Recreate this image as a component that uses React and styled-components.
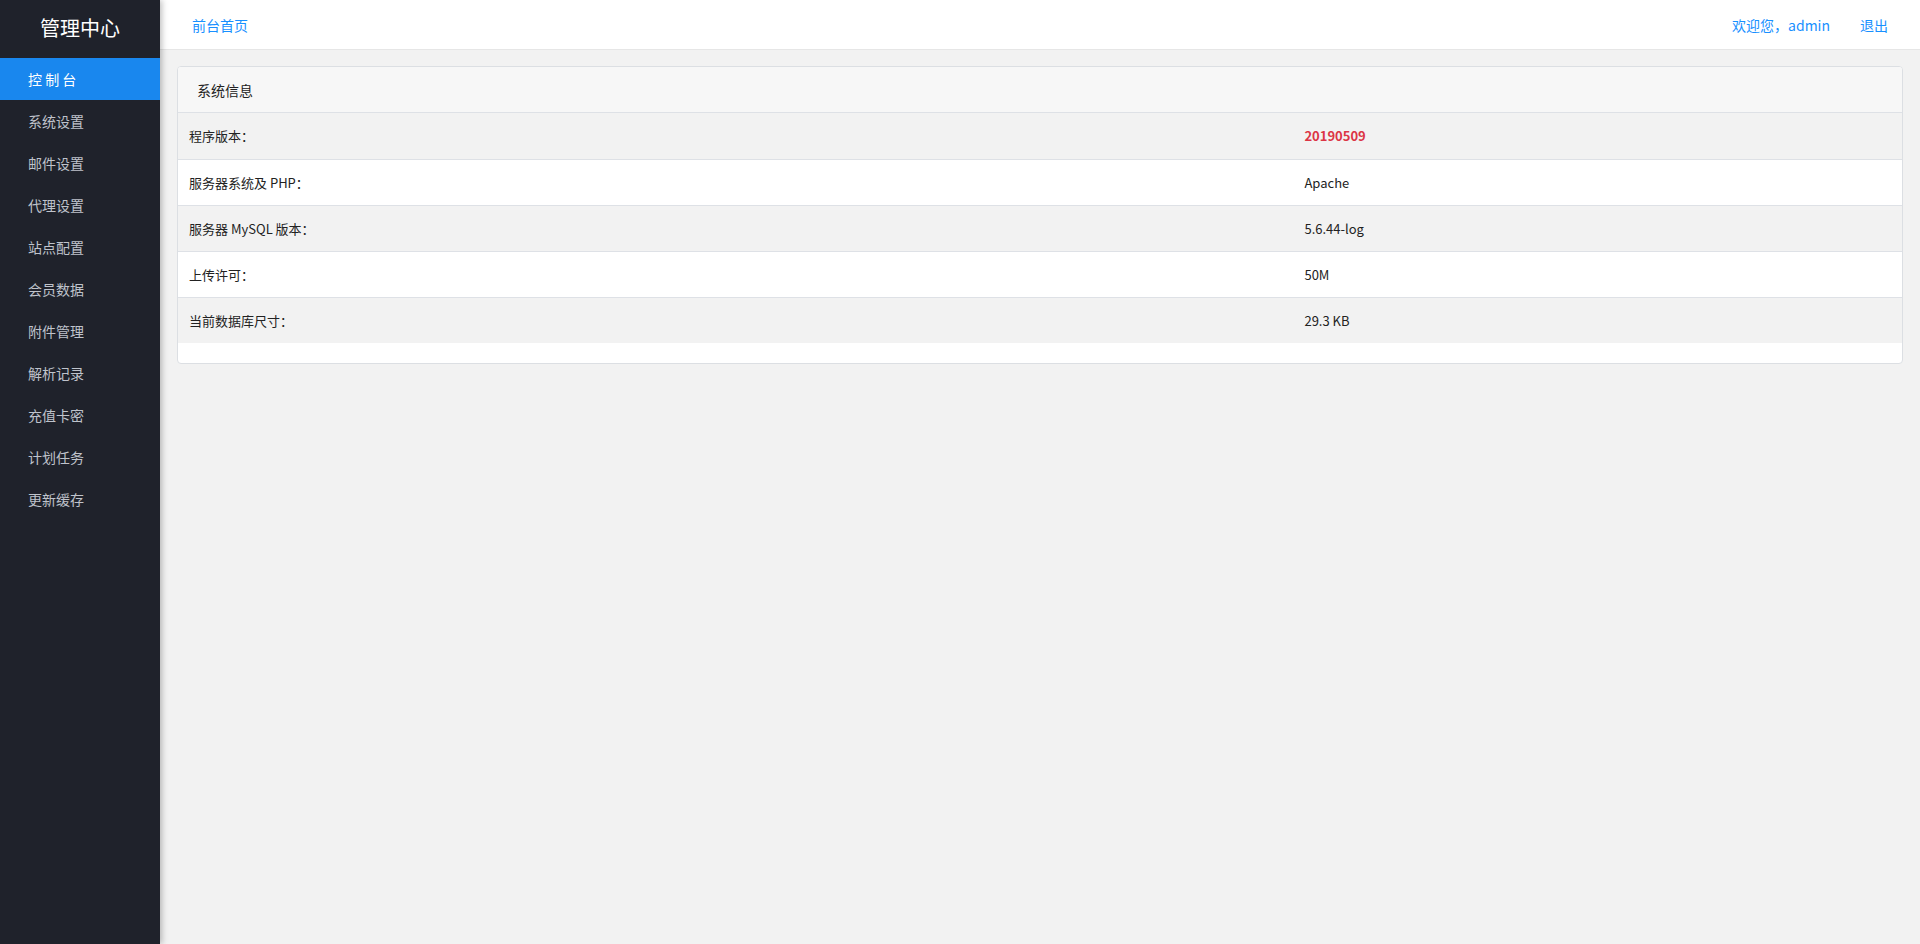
import React from 'react'
import styled, { createGlobalStyle } from 'styled-components'

const GlobalStyle = createGlobalStyle`
  html, body {
    margin: 0;
    padding: 0;
    background: #f2f2f2;
    font-family: "Noto Sans CJK SC", "Noto Sans", sans-serif;
  }
  * { box-sizing: border-box; }
`

const Layout = styled.div`
  display: flex;
  min-height: 944px;
`

const Sidebar = styled.aside`
  width: 160px;
  flex-shrink: 0;
  background: #1f222b;
  box-shadow: 2px 0 6px rgba(0, 0, 0, 0.25);
  position: relative;
  z-index: 2;
`

const Brand = styled.div`
  height: 58px;
  display: flex;
  align-items: center;
  justify-content: center;
  color: #fff;
  font-size: 20px;
  padding-bottom: 4px;
`

const NavItem = styled.a`
  display: flex;
  align-items: center;
  height: 42px;
  padding-left: 28px;
  font-size: 14px;
  text-decoration: none;
  color: ${p => (p.active ? '#fff' : '#bfc3cb')};
  background: ${p => (p.active ? '#1987ee' : 'transparent')};
`

const Main = styled.div`
  flex: 1;
  display: flex;
  flex-direction: column;
`

const TopBar = styled.header`
  height: 50px;
  background: #fff;
  border-bottom: 1px solid #e6e6e6;
  display: flex;
  align-items: center;
  justify-content: space-between;
  padding: 0 32px;
  font-size: 14px;
`

const TopLinks = styled.div`
  display: flex;
  gap: 30px;
`

const TopLink = styled.a`
  color: #1890ff;
  text-decoration: none;
`

const Content = styled.div`
  padding: 16px 17px;
`

const Card = styled.div`
  background: #fff;
  border: 1px solid #dcdfe3;
  border-radius: 4px;
  overflow: hidden;
  padding-bottom: 20px;
`

const CardHeader = styled.div`
  height: 46px;
  background: #f7f7f7;
  border-bottom: 1px solid #dee1e6;
  display: flex;
  align-items: center;
  padding-left: 19px;
  font-size: 14px;
  color: #222;
`

const Table = styled.table`
  width: 100%;
  border-collapse: collapse;
  font-size: 13px;
  color: #222;
`

const Row = styled.tr`
  height: 46px;
  background: ${p => (p.striped ? '#f2f2f2' : '#fff')};
  border-bottom: ${p => (p.last ? 'none' : '1px solid #dee1e6')};
`

const Cell = styled.td`
  padding: 0 11px;
  vertical-align: middle;
  width: ${p => p.width || 'auto'};
`

const Version = styled.strong`
  color: #dc3545;
  font-weight: 700;
`

const navItems = ['系统设置', '邮件设置', '代理设置', '站点配置', '会员数据', '附件管理', '解析记录', '充值卡密', '计划任务', '更新缓存']

const rows = [
  { label: '程序版本：', value: <Version>20190509</Version> },
  { label: '服务器系统及 PHP：', value: 'Apache' },
  { label: '服务器 MySQL 版本：', value: '5.6.44-log' },
  { label: '上传许可：', value: '50M' },
  { label: '当前数据库尺寸：', value: '29.3 KB' },
]

export default function App() {
  return (
    <>
      <GlobalStyle />
      <Layout>
        <Sidebar>
          <Brand>管理中心</Brand>
          <NavItem href="#" active>控 制 台</NavItem>
          {navItems.map(item => (
            <NavItem href="#" key={item}>{item}</NavItem>
          ))}
        </Sidebar>
        <Main>
          <TopBar>
            <TopLink href="#">前台首页</TopLink>
            <TopLinks>
              <TopLink href="#">欢迎您，admin</TopLink>
              <TopLink href="#">退出</TopLink>
            </TopLinks>
          </TopBar>
          <Content>
            <Card>
              <CardHeader>系统信息</CardHeader>
              <Table>
                <tbody>
                  {rows.map((r, i) => (
                    <Row key={i} striped={i % 2 === 0} last={i === rows.length - 1}>
                      <Cell width="64.7%">{r.label}</Cell>
                      <Cell>{r.value}</Cell>
                    </Row>
                  ))}
                </tbody>
              </Table>
            </Card>
          </Content>
        </Main>
      </Layout>
    </>
  )
}
